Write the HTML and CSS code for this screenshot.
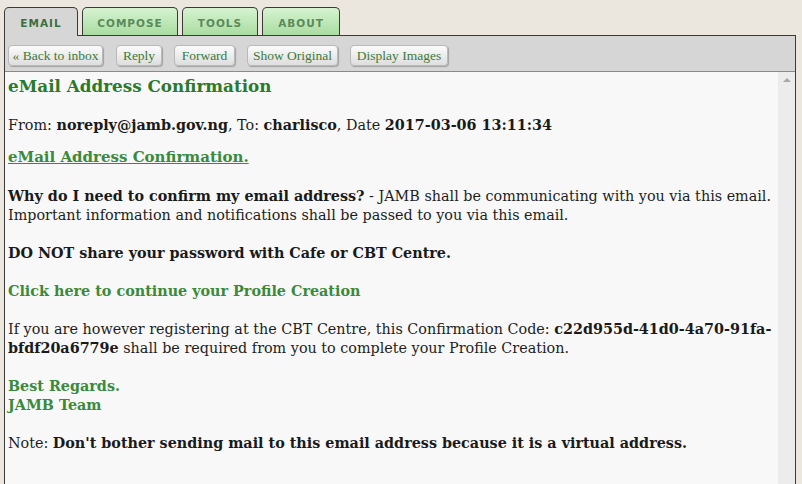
FILE: index.html
```html
<!DOCTYPE html>
<html>
<head>
<meta charset="utf-8">
<link rel="stylesheet" href="styles.css">
</head>
<body>
<div class="tabs">
  <div class="tab active">EMAIL</div>
  <div class="tab">COMPOSE</div>
  <div class="tab">TOOLS</div>
  <div class="tab">ABOUT</div>
</div>
<div class="panel">
  <div class="toolbar">
    <span class="btn btn-back">« Back to inbox</span>
    <span class="btn btn-reply">Reply</span>
    <span class="btn btn-fwd">Forward</span>
    <span class="btn btn-orig">Show Original</span>
    <span class="btn btn-img">Display Images</span>
  </div>
  <div class="main">
    <div class="content">
      <h1 class="title">eMail Address Confirmation</h1>
      <p class="meta">From: <b>noreply@jamb.gov.ng</b>, To: <b>charlisco</b>, Date <b>2017-03-06 13:11:34</b></p>
      <p class="sublink"><a href="#">eMail Address Confirmation.</a></p>
      <p class="para"><b>Why do I need to confirm my email address?</b> - JAMB shall be communicating with you via this email. Important information and notifications shall be passed to you via this email.</p>
      <p class="para"><b>DO NOT share your password with Cafe or CBT Centre.</b></p>
      <p class="para green"><b>Click here to continue your Profile Creation</b></p>
      <p class="para">If you are however registering at the CBT Centre, this Confirmation Code: <b>c22d955d-41d0-4a70-91fa-bfdf20a6779e</b> shall be required from you to complete your Profile Creation.</p>
      <p class="para green"><b>Best Regards.<br>JAMB Team</b></p>
      <p class="para">Note: <b>Don't bother sending mail to this email address because it is a virtual address.</b></p>
    </div>
    <div class="scrollbar"><span class="arrow"></span></div>
  </div>
</div>
</body>
</html>
```

FILE: styles.css
```css
html, body {
  margin: 0;
  padding: 0;
  height: 100%;
  overflow: hidden;
}
body {
  background: #ebe7de;
  padding: 7px 6px 0 4px;
  box-sizing: border-box;
  font-family: "DejaVu Serif", Georgia, serif;
}
.tabs {
  display: flex;
  gap: 4px;
  height: 28px;
  position: relative;
  z-index: 1;
}
.tab {
  box-sizing: border-box;
  height: 28px;
  border: 1px solid #3a3a3a;
  border-bottom: none;
  border-radius: 5px 5px 0 0;
  background: linear-gradient(#d6f3d0, #a9dca1);
  color: #5a8a5a;
  font-family: "DejaVu Sans", Verdana, sans-serif;
  font-weight: bold;
  font-size: 10.5px;
  letter-spacing: 1px;
  display: flex;
  align-items: center;
  justify-content: center;
  padding-top: 3px;
}
.tab:nth-child(1) { width: 74px; }
.tab:nth-child(2) { width: 96px; }
.tab:nth-child(3) { width: 76px; }
.tab:nth-child(4) { width: 78px; }
.tab.active {
  background: #d6d6d6;
  color: #3d6e3d;
  height: 29px;
  padding-top: 2px;
}
.panel {
  border: 1px solid #3a3a3a;
  border-bottom: none;
  background: #d6d6d6;
  height: 460px;
  display: flex;
  flex-direction: column;
}
.toolbar {
  height: 36px;
  box-sizing: border-box;
  border-bottom: 1px solid #8a8a8a;
  display: flex;
  align-items: center;
  padding: 4px 0 0 3px;
  gap: 12px;
}
.btn {
  box-sizing: border-box;
  height: 21px;
  display: flex;
  align-items: center;
  justify-content: center;
  white-space: nowrap;
  border: 1px solid #b9b9b9;
  border-radius: 4px;
  background: linear-gradient(#fbfbfb, #dedede);
  box-shadow: 1px 1px 1px rgba(0,0,0,0.25);
  color: #3d7a3d;
  font-family: "Liberation Serif", serif;
  font-size: 13.5px;
  padding: 0 4px;
}
.btn-back { width: 95px; }
.btn-reply { width: 46px; margin-left: 1px; }
.btn-fwd { width: 61px; }
.btn-orig { width: 91px; }
.btn-img { width: 98px; }
.main {
  flex: 1;
  display: flex;
  background: #f8f8f8;
}
.content {
  flex: 1;
  padding: 2px 0 0 3px;
  font-size: 14.35px;
  line-height: 19px;
  color: #1e1e1e;
}
.scrollbar {
  width: 17px;
  background: #ececec;
  position: relative;
}
.arrow {
  position: absolute;
  top: 6px;
  left: 5px;
  width: 0;
  height: 0;
  border-left: 4px solid transparent;
  border-right: 4px solid transparent;
  border-bottom: 4px solid #a8a8a8;
}
.title {
  margin: 0 0 18px;
  font-size: 16.8px;
  line-height: 24px;
  color: #2a7a2a;
}
.meta { margin: 0; }
.sublink { margin: 13px 0 0; font-weight: bold; font-size: 15px; }
.sublink a { color: #3a8a3a; }
.para { margin: 20px 0 0; }
.para + .para { margin-top: 19px; }
.green { color: #3a8a3a; }
.meta b, .para b { color: #1a1a1a; }
.green b { color: #3a8a3a; }
```
